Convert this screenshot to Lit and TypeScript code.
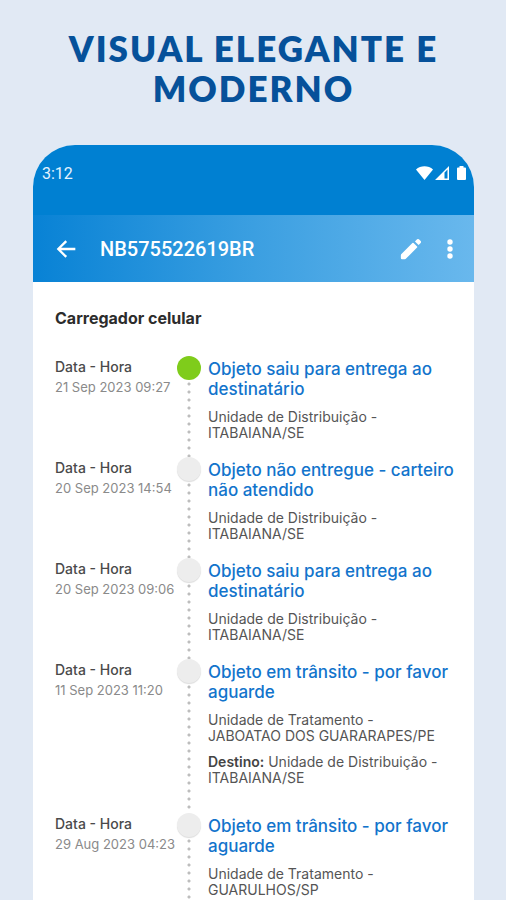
import { LitElement, html, css, svg } from "lit";
import { customElement, property } from "lit/decorators.js";
import { classMap } from "lit/directives/class-map.js";

interface TrackingEvent {
  date: string;
  title: string;
  unit: string;
  city: string;
  destination?: { unit: string; city: string };
}

const EVENTS: TrackingEvent[] = [
  { date: "21 Sep 2023 09:27", title: "Objeto saiu para entrega ao destinatário", unit: "Unidade de Distribuição", city: "ITABAIANA/SE" },
  { date: "20 Sep 2023 14:54", title: "Objeto não entregue - carteiro não atendido", unit: "Unidade de Distribuição", city: "ITABAIANA/SE" },
  { date: "20 Sep 2023 09:06", title: "Objeto saiu para entrega ao destinatário", unit: "Unidade de Distribuição", city: "ITABAIANA/SE" },
  {
    date: "11 Sep 2023 11:20",
    title: "Objeto em trânsito - por favor aguarde",
    unit: "Unidade de Tratamento",
    city: "JABOATAO DOS GUARARAPES/PE",
    destination: { unit: "Unidade de Distribuição", city: "ITABAIANA/SE" },
  },
  { date: "29 Aug 2023 04:23", title: "Objeto em trânsito - por favor aguarde", unit: "Unidade de Tratamento", city: "GUARULHOS/SP" },
];

@customElement("tracking-item")
class TrackingItem extends LitElement {
  @property({ attribute: false }) event!: TrackingEvent;
  @property({ type: Boolean }) current = false;

  static styles = css`
    :host {
      display: grid;
      grid-template-columns: 122px 24px minmax(0, 1fr);
    }
    p, h3 { margin: 0; }
    .when {
      white-space: nowrap;
      font-size: 14px;
      line-height: 21px;
      font-weight: 500;
      color: #4a4a4a;
    }
    .date { font-size: 13px; color: #8a8a8a; font-weight: 400; }
    .rail {
      background: radial-gradient(circle at center, #bdbdbd 1px, transparent 2px) center top / 8px 8px repeat-y;
    }
    .dot {
      width: 24px;
      height: 24px;
      border-radius: 50%;
      background: #ededed;
      box-shadow: 0 1px 1px #dcdcdc;
    }
    .dot.current { background: #7fcc1b; box-shadow: none; }
    .body {
      padding: 3px 0 16px 7px;
      display: flex;
      flex-direction: column;
      gap: 10px;
      font-size: 14px;
      line-height: 16px;
      color: #555;
    }
    .title {
      font-size: 17px;
      line-height: 20px;
      font-weight: 500;
      color: #1274cc;
    }
    .destination { margin-bottom: 11px; }
    .destination b { font-weight: 600; color: #444; }
  `;

  render() {
    const e = this.event;
    return html`
      <div class="when">
        <p>Data - Hora</p>
        <p class="date"><time>${e.date}</time></p>
      </div>
      <div class="rail"><div class=${classMap({ dot: true, current: this.current })}></div></div>
      <div class="body">
        <h3 class="title">${e.title}</h3>
        <p>${e.unit} -<br />${e.city}</p>
        ${e.destination
          ? html`<p class="destination"><b>Destino:</b> ${e.destination.unit} -<br />${e.destination.city}</p>`
          : ""}
      </div>
    `;
  }
}

const wifi = svg`<path d="M0 3.5C4.5-.9 12.500-.9 17 3.500L8.500 14z"/>`;
const signal = svg`<path fill-rule="evenodd" d="M14 0V14H0zM9.500 6.500V12.500H12.500V3.500z"/>`;
const battery = svg`<path d="M2.500 1.500V0H6.500V1.500H8Q9 1.500 9 2.500V13Q9 14 8 14H1Q0 14 0 13V2.500Q0 1.500 1 1.500z"/>`;

@customElement("app-root")
class AppRoot extends LitElement {
  static styles = css`
    :host {
      display: flex;
      flex-direction: column;
      box-sizing: border-box;
      min-height: 100vh;
      padding: 28px 32px 0 33px;
      background: #e1e9f4;
      font-family: Inter, "Open Sans", sans-serif;
    }
    .headline {
      margin: 0 0 37px;
      text-align: center;
      font: 800 35px/40px Lato, sans-serif;
      letter-spacing: 2px;
      color: #06519a;
    }
    .phone {
      flex: 1;
      overflow: hidden;
      border-radius: 42px 42px 0 0;
      background: #fff;
    }
    .status {
      display: flex;
      justify-content: space-between;
      align-items: flex-start;
      box-sizing: border-box;
      height: 70px;
      padding: 19px 8px 0 9px;
      background: #0080d2;
      color: #e4f3ff;
      font: 400 16px/20px Roboto, sans-serif;
    }
    .indicators { display: flex; gap: 2px; padding-top: 2px; }
    .indicators .battery { margin-left: 6px; }
    svg { display: block; fill: #fff; }
    .bar {
      display: flex;
      align-items: center;
      height: 67px;
      padding: 0 8px 0 17px;
      background: linear-gradient(90deg, #0882d5, #3b9fe1 50%, #69b8ed);
      color: #fff;
    }
    .bar h1 {
      flex: 1;
      margin: 0 0 0 18px;
      font: 500 20px/28px Roboto, sans-serif;
    }
    button {
      display: grid;
      place-items: center;
      width: 32px;
      height: 40px;
      padding: 0;
      border: 0;
      background: none;
    }
    .edit { margin-right: 7px; }
    .content { padding: 25px 16px 0 22px; }
    h2 {
      margin: 0 0 27px;
      font-size: 16px;
      line-height: 22px;
      font-weight: 700;
      color: #2c2c2c;
    }
  `;

  render() {
    return html`
      <h1 class="headline">VISUAL ELEGANTE E MODERNO</h1>
      <main class="phone">
        <div class="status">
          <span>3:12</span>
          <div class="indicators">
            <svg width="17" height="14" viewBox="0 0 17 14">${wifi}</svg>
            <svg width="14" height="14" viewBox="0 0 14 14">${signal}</svg>
            <svg class="battery" width="9" height="14" viewBox="0 0 9 14">${battery}</svg>
          </div>
        </div>
        <header class="bar">
          <button aria-label="Voltar">
            <svg width="28" height="28" viewBox="0 0 24 24"><path d="M20 11H7.830l5.090-5.090L11.500 4.500 4 12l7.500 7.500 1.410-1.410L7.830 13H20z"/></svg>
          </button>
          <h1>NB575522619BR</h1>
          <button class="edit" aria-label="Editar">
            <svg width="28" height="28" viewBox="0 0 24 24"><path d="M3.800 16.200 13.200 6.800Q13.700 6.300 14.200 6.800L17.200 9.800Q17.700 10.300 17.200 10.800L7.800 20.200Q7.400 20.700 6.700 20.700H4.300Q3.300 20.700 3.300 19.700V17.300Q3.300 16.600 3.800 16.200zM15.400 5.500 17.200 3.700Q18 3 18.800 3.700L20.300 5.200Q21 6 20.300 6.800L18.500 8.600z"/></svg>
          </button>
          <button aria-label="Mais opções">
            <svg width="28" height="28" viewBox="0 0 28 28"><circle cx="14" cy="7" r="2.700"/><circle cx="14" cy="14" r="2.700"/><circle cx="14" cy="21" r="2.700"/></svg>
          </button>
        </header>
        <section class="content">
          <h2>Carregador celular</h2>
          ${EVENTS.map((e, i) => html`<tracking-item .event=${e} ?current=${i === 0}></tracking-item>`)}
        </section>
      </main>
    `;
  }
}
